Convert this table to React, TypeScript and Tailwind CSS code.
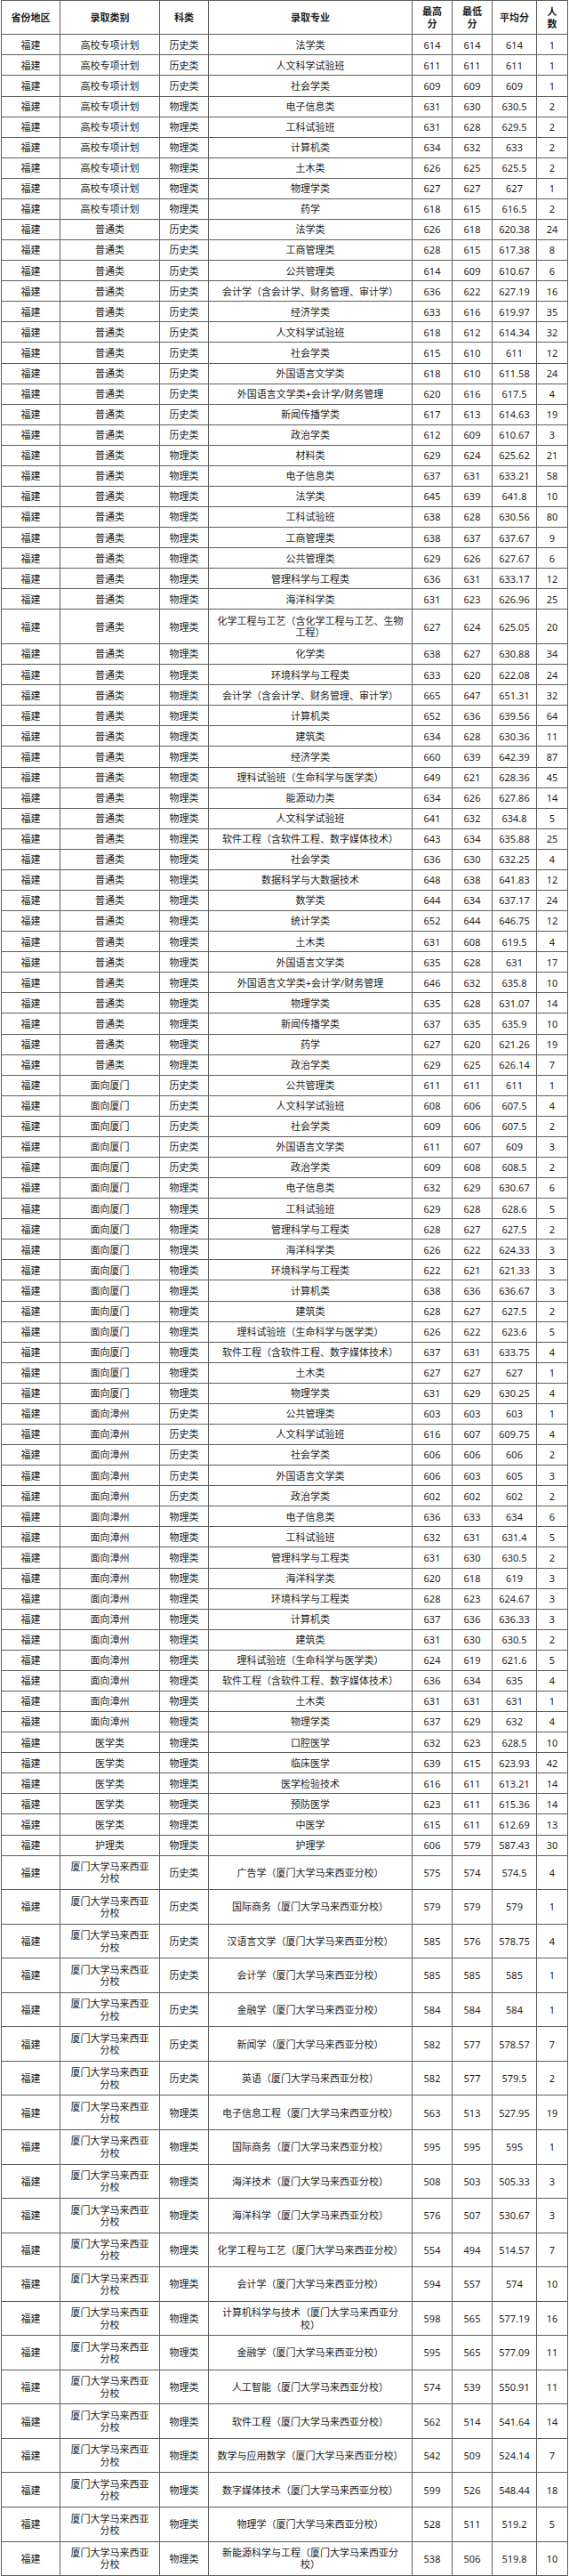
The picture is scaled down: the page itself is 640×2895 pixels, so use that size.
import React from "react";

type Row = [string, string, string, string, string, string, string, boolean?];

const MY = "（厦门大学马来西亚分校）";
const MYW = "厦门大学马来西亚\n分校";

const rows: Row[] = [
  ["高校专项计划", "历史类", "法学类", "614", "614", "614", "1"],
  ["高校专项计划", "历史类", "人文科学试验班", "611", "611", "611", "1"],
  ["高校专项计划", "历史类", "社会学类", "609", "609", "609", "1"],
  ["高校专项计划", "物理类", "电子信息类", "631", "630", "630.5", "2"],
  ["高校专项计划", "物理类", "工科试验班", "631", "628", "629.5", "2"],
  ["高校专项计划", "物理类", "计算机类", "634", "632", "633", "2"],
  ["高校专项计划", "物理类", "土木类", "626", "625", "625.5", "2"],
  ["高校专项计划", "物理类", "物理学类", "627", "627", "627", "1"],
  ["高校专项计划", "物理类", "药学", "618", "615", "616.5", "2"],
  ["普通类", "历史类", "法学类", "626", "618", "620.38", "24"],
  ["普通类", "历史类", "工商管理类", "628", "615", "617.38", "8"],
  ["普通类", "历史类", "公共管理类", "614", "609", "610.67", "6"],
  ["普通类", "历史类", "会计学（含会计学、财务管理、审计学）", "636", "622", "627.19", "16"],
  ["普通类", "历史类", "经济学类", "633", "616", "619.97", "35"],
  ["普通类", "历史类", "人文科学试验班", "618", "612", "614.34", "32"],
  ["普通类", "历史类", "社会学类", "615", "610", "611", "12"],
  ["普通类", "历史类", "外国语言文学类", "618", "610", "611.58", "24"],
  ["普通类", "历史类", "外国语言文学类+会计学/财务管理", "620", "616", "617.5", "4"],
  ["普通类", "历史类", "新闻传播学类", "617", "613", "614.63", "19"],
  ["普通类", "历史类", "政治学类", "612", "609", "610.67", "3"],
  ["普通类", "物理类", "材料类", "629", "624", "625.62", "21"],
  ["普通类", "物理类", "电子信息类", "637", "631", "633.21", "58"],
  ["普通类", "物理类", "法学类", "645", "639", "641.8", "10"],
  ["普通类", "物理类", "工科试验班", "638", "628", "630.56", "80"],
  ["普通类", "物理类", "工商管理类", "638", "637", "637.67", "9"],
  ["普通类", "物理类", "公共管理类", "629", "626", "627.67", "6"],
  ["普通类", "物理类", "管理科学与工程类", "636", "631", "633.17", "12"],
  ["普通类", "物理类", "海洋科学类", "631", "623", "626.96", "25"],
  ["普通类", "物理类", "化学工程与工艺（含化学工程与工艺、生物\n工程）", "627", "624", "625.05", "20", true],
  ["普通类", "物理类", "化学类", "638", "627", "630.88", "34"],
  ["普通类", "物理类", "环境科学与工程类", "633", "620", "622.08", "24"],
  ["普通类", "物理类", "会计学（含会计学、财务管理、审计学）", "665", "647", "651.31", "32"],
  ["普通类", "物理类", "计算机类", "652", "636", "639.56", "64"],
  ["普通类", "物理类", "建筑类", "634", "628", "630.36", "11"],
  ["普通类", "物理类", "经济学类", "660", "639", "642.39", "87"],
  ["普通类", "物理类", "理科试验班（生命科学与医学类）", "649", "621", "628.36", "45"],
  ["普通类", "物理类", "能源动力类", "634", "626", "627.86", "14"],
  ["普通类", "物理类", "人文科学试验班", "641", "632", "634.8", "5"],
  ["普通类", "物理类", "软件工程（含软件工程、数字媒体技术）", "643", "634", "635.88", "25"],
  ["普通类", "物理类", "社会学类", "636", "630", "632.25", "4"],
  ["普通类", "物理类", "数据科学与大数据技术", "648", "638", "641.83", "12"],
  ["普通类", "物理类", "数学类", "644", "634", "637.17", "24"],
  ["普通类", "物理类", "统计学类", "652", "644", "646.75", "12"],
  ["普通类", "物理类", "土木类", "631", "608", "619.5", "4"],
  ["普通类", "物理类", "外国语言文学类", "635", "628", "631", "17"],
  ["普通类", "物理类", "外国语言文学类+会计学/财务管理", "646", "632", "635.8", "10"],
  ["普通类", "物理类", "物理学类", "635", "628", "631.07", "14"],
  ["普通类", "物理类", "新闻传播学类", "637", "635", "635.9", "10"],
  ["普通类", "物理类", "药学", "627", "620", "621.26", "19"],
  ["普通类", "物理类", "政治学类", "629", "625", "626.14", "7"],
  ["面向厦门", "历史类", "公共管理类", "611", "611", "611", "1"],
  ["面向厦门", "历史类", "人文科学试验班", "608", "606", "607.5", "4"],
  ["面向厦门", "历史类", "社会学类", "609", "606", "607.5", "2"],
  ["面向厦门", "历史类", "外国语言文学类", "611", "607", "609", "3"],
  ["面向厦门", "历史类", "政治学类", "609", "608", "608.5", "2"],
  ["面向厦门", "物理类", "电子信息类", "632", "629", "630.67", "6"],
  ["面向厦门", "物理类", "工科试验班", "629", "628", "628.6", "5"],
  ["面向厦门", "物理类", "管理科学与工程类", "628", "627", "627.5", "2"],
  ["面向厦门", "物理类", "海洋科学类", "626", "622", "624.33", "3"],
  ["面向厦门", "物理类", "环境科学与工程类", "622", "621", "621.33", "3"],
  ["面向厦门", "物理类", "计算机类", "638", "636", "636.67", "3"],
  ["面向厦门", "物理类", "建筑类", "628", "627", "627.5", "2"],
  ["面向厦门", "物理类", "理科试验班（生命科学与医学类）", "626", "622", "623.6", "5"],
  ["面向厦门", "物理类", "软件工程（含软件工程、数字媒体技术）", "637", "631", "633.75", "4"],
  ["面向厦门", "物理类", "土木类", "627", "627", "627", "1"],
  ["面向厦门", "物理类", "物理学类", "631", "629", "630.25", "4"],
  ["面向漳州", "历史类", "公共管理类", "603", "603", "603", "1"],
  ["面向漳州", "历史类", "人文科学试验班", "616", "607", "609.75", "4"],
  ["面向漳州", "历史类", "社会学类", "606", "606", "606", "2"],
  ["面向漳州", "历史类", "外国语言文学类", "606", "603", "605", "3"],
  ["面向漳州", "历史类", "政治学类", "602", "602", "602", "2"],
  ["面向漳州", "物理类", "电子信息类", "636", "633", "634", "6"],
  ["面向漳州", "物理类", "工科试验班", "632", "631", "631.4", "5"],
  ["面向漳州", "物理类", "管理科学与工程类", "631", "630", "630.5", "2"],
  ["面向漳州", "物理类", "海洋科学类", "620", "618", "619", "3"],
  ["面向漳州", "物理类", "环境科学与工程类", "628", "623", "624.67", "3"],
  ["面向漳州", "物理类", "计算机类", "637", "636", "636.33", "3"],
  ["面向漳州", "物理类", "建筑类", "631", "630", "630.5", "2"],
  ["面向漳州", "物理类", "理科试验班（生命科学与医学类）", "624", "619", "621.6", "5"],
  ["面向漳州", "物理类", "软件工程（含软件工程、数字媒体技术）", "636", "634", "635", "4"],
  ["面向漳州", "物理类", "土木类", "631", "631", "631", "1"],
  ["面向漳州", "物理类", "物理学类", "637", "629", "632", "4"],
  ["医学类", "物理类", "口腔医学", "632", "623", "628.5", "10"],
  ["医学类", "物理类", "临床医学", "639", "615", "623.93", "42"],
  ["医学类", "物理类", "医学检验技术", "616", "611", "613.21", "14"],
  ["医学类", "物理类", "预防医学", "623", "611", "615.36", "14"],
  ["医学类", "物理类", "中医学", "615", "611", "612.69", "13"],
  ["护理类", "物理类", "护理学", "606", "579", "587.43", "30"],
  [MYW, "历史类", "广告学" + MY, "575", "574", "574.5", "4", true],
  [MYW, "历史类", "国际商务" + MY, "579", "579", "579", "1", true],
  [MYW, "历史类", "汉语言文学" + MY, "585", "576", "578.75", "4", true],
  [MYW, "历史类", "会计学" + MY, "585", "585", "585", "1", true],
  [MYW, "历史类", "金融学" + MY, "584", "584", "584", "1", true],
  [MYW, "历史类", "新闻学" + MY, "582", "577", "578.57", "7", true],
  [MYW, "历史类", "英语" + MY, "582", "577", "579.5", "2", true],
  [MYW, "物理类", "电子信息工程" + MY, "563", "513", "527.95", "19", true],
  [MYW, "物理类", "国际商务" + MY, "595", "595", "595", "1", true],
  [MYW, "物理类", "海洋技术" + MY, "508", "503", "505.33", "3", true],
  [MYW, "物理类", "海洋科学" + MY, "576", "507", "530.67", "3", true],
  [MYW, "物理类", "化学工程与工艺" + MY, "554", "494", "514.57", "7", true],
  [MYW, "物理类", "会计学" + MY, "594", "557", "574", "10", true],
  [MYW, "物理类", "计算机科学与技术（厦门大学马来西亚分\n校）", "598", "565", "577.19", "16", true],
  [MYW, "物理类", "金融学" + MY, "595", "565", "577.09", "11", true],
  [MYW, "物理类", "人工智能" + MY, "574", "539", "550.91", "11", true],
  [MYW, "物理类", "软件工程" + MY, "562", "514", "541.64", "14", true],
  [MYW, "物理类", "数学与应用数学" + MY, "542", "509", "524.14", "7", true],
  [MYW, "物理类", "数字媒体技术" + MY, "599", "526", "548.44", "18", true],
  [MYW, "物理类", "物理学" + MY, "528", "511", "519.2", "5", true],
  [MYW, "物理类", "新能源科学与工程（厦门大学马来西亚分\n校）", "538", "506", "519.8", "10", true],
];

const cell =
  "flex items-center justify-center text-center border-r border-b border-[#5e5e5e] whitespace-pre leading-[13.3px]";

export default function App() {
  return (
    <div
      className="w-[640px] bg-white text-[#1e1e1e] text-[11px] pl-px"
      style={{ fontFamily: '"Noto Sans", "Noto Sans CJK SC", sans-serif' }}
    >
      <div className="w-[638px] border-l border-t border-[#5e5e5e]">
        <div className="grid grid-cols-[66px_112px_55px_229px_45px_45px_50px_35px] h-[38.3px] font-bold">
          <div className={cell}>省份地区</div>
          <div className={cell}>录取类别</div>
          <div className={cell}>科类</div>
          <div className={cell}>录取专业</div>
          <div className={cell}>{"最高\n分"}</div>
          <div className={cell}>{"最低\n分"}</div>
          <div className={cell}>平均分</div>
          <div className={cell}>{"人\n数"}</div>
        </div>
        {rows.map((r, i) => (
          <div
            key={i}
            className={
              "grid grid-cols-[66px_112px_55px_229px_45px_45px_50px_35px] " +
              (r[7] ? "h-[38.55px]" : "h-[23.08px]")
            }
          >
            <div className={cell}>福建</div>
            <div className={cell}>{r[0]}</div>
            <div className={cell}>{r[1]}</div>
            <div className={cell}>{r[2]}</div>
            <div className={cell}>{r[3]}</div>
            <div className={cell}>{r[4]}</div>
            <div className={cell}>{r[5]}</div>
            <div className={cell}>{r[6]}</div>
          </div>
        ))}
      </div>
    </div>
  );
}
